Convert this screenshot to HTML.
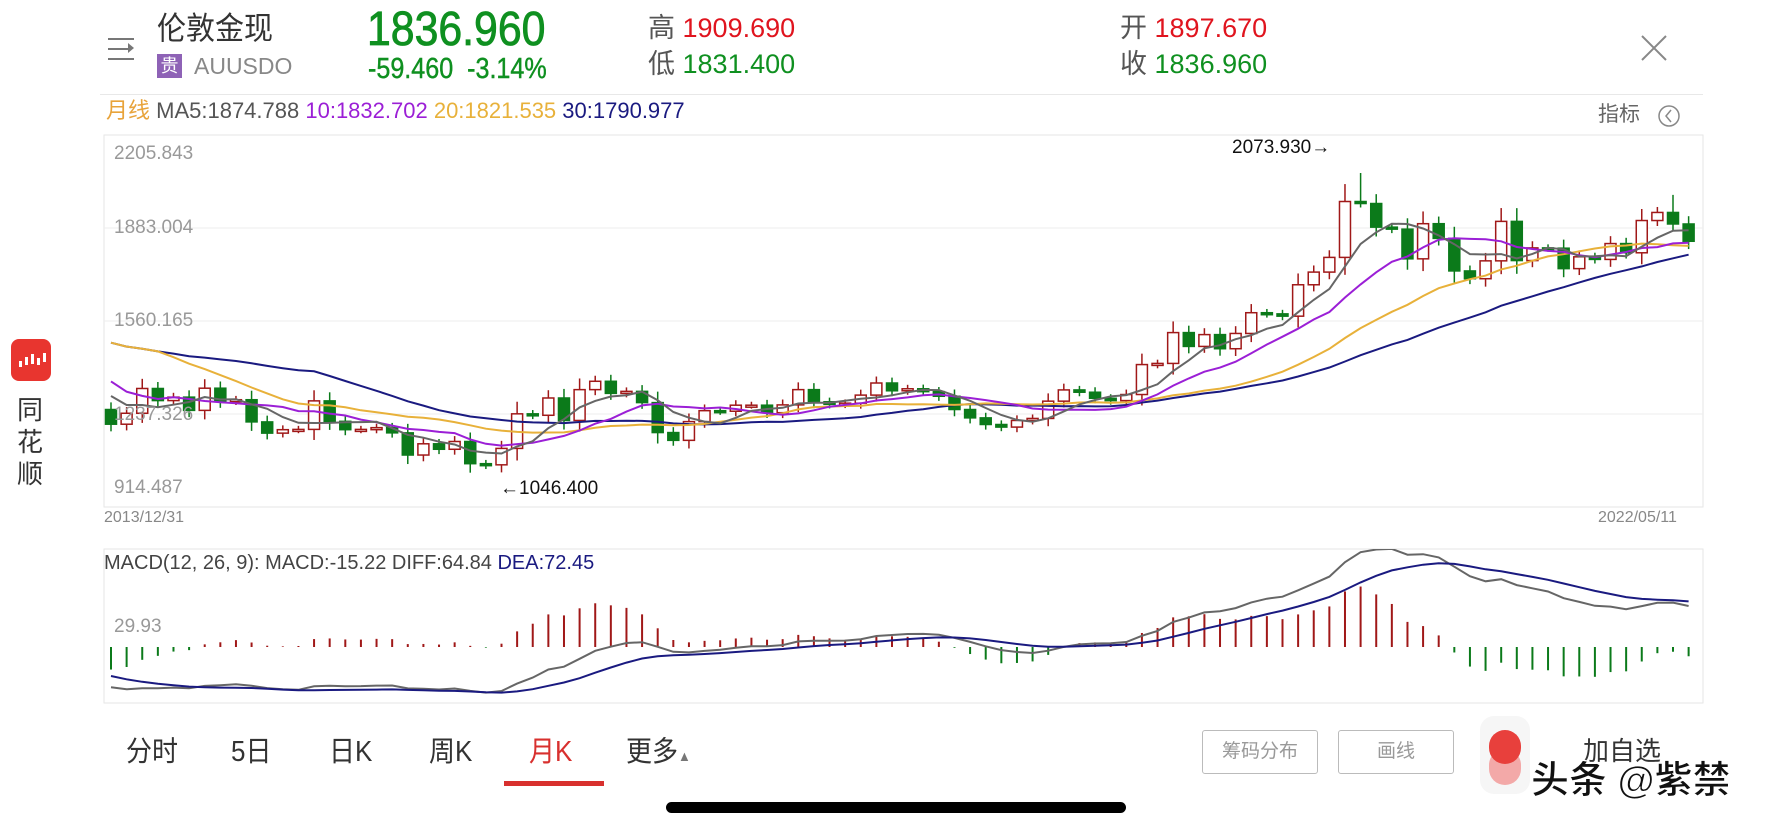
<!DOCTYPE html>
<html><head><meta charset="utf-8">
<style>
*{margin:0;padding:0;box-sizing:border-box}
body{width:1792px;height:828px;background:#fff;position:relative;overflow:hidden;font-family:"Liberation Sans","Noto Sans CJK SC",sans-serif;}
.a{position:absolute;white-space:nowrap;line-height:1}
.g{color:#0f9020}.r{color:#e0141e}.k{color:#333}
</style></head><body>
<div class="a" style="left:108px;top:38px;width:26px;height:2px;background:#777"></div>
<div class="a" style="left:108px;top:48px;width:20px;height:2px;background:#777"></div>
<div class="a" style="left:108px;top:58px;width:26px;height:2px;background:#777"></div>
<div class="a" style="left:128px;top:43px;width:0;height:0;border-left:6px solid #777;border-top:5px solid transparent;border-bottom:5px solid transparent"></div>
<div class="a k" style="left:157px;top:14px;font-size:29px;transform:scaleY(1.08);transform-origin:top">伦敦金现</div>
<div class="a" style="left:157px;top:54px;width:25px;height:24px;background:#8e62b6;color:#fff;font-size:18px;text-align:center;line-height:24px">贵</div>
<div class="a" style="left:194px;top:55px;font-size:23px;color:#888">AUUSDO</div>
<div class="a g" style="left:367px;top:4px;font-size:46px;transform:scale(0.93,1.05);transform-origin:left top;-webkit-text-stroke:0.8px #0f9020">1836.960</div>
<div class="a g" style="left:368px;top:55px;font-size:27px;transform:scale(0.93,1.05);transform-origin:left top;-webkit-text-stroke:0.4px #0f9020">-59.460&nbsp;&nbsp;-3.14%</div>
<div class="a" style="left:648px;top:15px;font-size:27px;color:#555">高 <span class="r">1909.690</span></div>
<div class="a" style="left:648px;top:51px;font-size:27px;color:#555">低 <span class="g">1831.400</span></div>
<div class="a" style="left:1120px;top:15px;font-size:27px;color:#555">开 <span class="r">1897.670</span></div>
<div class="a" style="left:1120px;top:51px;font-size:27px;color:#555">收 <span class="g">1836.960</span></div>
<svg class="a" style="left:1640px;top:34px" width="28" height="28"><path d="M2 2L26 26M26 2L2 26" stroke="#888" stroke-width="2"/></svg>
<div class="a" style="left:100px;top:94px;width:1603px;height:1px;background:#e8e8e8"></div>
<div class="a" style="left:106px;top:100px;font-size:22px;color:#e8a33a">月线 <span style="color:#555">MA5:1874.788</span> <span style="color:#9b1fd6">10:1832.702</span> <span style="color:#e8b13a">20:1821.535</span> <span style="color:#1a1a80">30:1790.977</span></div>
<div class="a" style="left:1598px;top:104px;font-size:21px;color:#666">指标</div>
<svg class="a" style="left:1657px;top:104px" width="24" height="24"><circle cx="12" cy="12" r="10" fill="none" stroke="#888" stroke-width="1.5"/><path d="M14 6L9 12L14 18" fill="none" stroke="#888" stroke-width="1.5"/></svg>
<div class="a" style="left:11px;top:339px;width:40px;height:42px;border-radius:8px;background:#e8352f"></div>
<svg class="a" style="left:11px;top:339px" width="40" height="42"><g fill="#fff"><rect x="8" y="22" width="3" height="6"/><rect x="14" y="18" width="3" height="8"/><rect x="20" y="15" width="3" height="10"/><rect x="26" y="19" width="3" height="7"/><rect x="32" y="14" width="3" height="9"/></g></svg>
<div class="a k" style="left:17px;top:394px;font-size:26px;line-height:32px;white-space:normal;width:28px">同花顺</div>
<svg id="c" class="a" style="left:0;top:0" width="1792" height="828"></svg>
<div class="a" style="left:114px;top:144px;font-size:19px;color:#999">2205.843</div>
<div class="a" style="left:114px;top:218px;font-size:19px;color:#999">1883.004</div>
<div class="a" style="left:114px;top:311px;font-size:19px;color:#999">1560.165</div>
<div class="a" style="left:114px;top:405px;font-size:19px;color:#999">1237.326</div>
<div class="a" style="left:114px;top:478px;font-size:19px;color:#999">914.487</div>
<div class="a" style="left:1232px;top:138px;font-size:19px;color:#111">2073.930→</div>
<div class="a" style="left:500px;top:479px;font-size:19px;color:#111">←1046.400</div>
<div class="a" style="left:104px;top:510px;font-size:16px;color:#888">2013/12/31</div>
<div class="a" style="left:1598px;top:510px;font-size:16px;color:#888">2022/05/11</div>
<div class="a" style="left:104px;top:553px;font-size:20px;color:#444">MACD(12, 26, 9): MACD:-15.22 DIFF:64.84 <span style="color:#1a1a80">DEA:72.45</span></div>
<div class="a" style="left:114px;top:617px;font-size:19px;color:#999">29.93</div>
<div class="a k" style="left:126px;top:738px;font-size:26px;transform:scaleY(1.1)">分时</div>
<div class="a k" style="left:231px;top:738px;font-size:26px;transform:scaleY(1.1)">5日</div>
<div class="a k" style="left:329px;top:738px;font-size:26px;transform:scaleY(1.1)">日K</div>
<div class="a k" style="left:429px;top:738px;font-size:26px;transform:scaleY(1.1)">周K</div>
<div class="a" style="left:529px;top:738px;font-size:26px;color:#d8302e;transform:scaleY(1.1)">月K</div>
<div class="a k" style="left:626px;top:738px;font-size:26px;transform:scaleY(1.1)">更多<span style="font-size:13px;color:#777">▲</span></div>
<div class="a" style="left:504px;top:781px;width:100px;height:5px;background:#d8302e"></div>
<div class="a" style="left:1202px;top:730px;width:116px;height:44px;border:1.5px solid #bbb;border-radius:3px;color:#999;font-size:19px;text-align:center;line-height:42px">筹码分布</div>
<div class="a" style="left:1338px;top:730px;width:116px;height:44px;border:1.5px solid #bbb;border-radius:3px;color:#999;font-size:19px;text-align:center;line-height:42px">画线</div>
<div class="a" style="left:1480px;top:716px;width:50px;height:78px;border-radius:14px;background:#f6f6f6"></div>
<div class="a" style="left:1489px;top:749px;width:32px;height:36px;border-radius:16px;background:#f3a9a8"></div>
<div class="a" style="left:1489px;top:730px;width:32px;height:34px;border-radius:16px;background:#e8403c"></div>
<div class="a k" style="left:1583px;top:738px;font-size:26px">加自选</div>
<div class="a" style="left:1531px;top:762px;font-size:38px;font-weight:bold;color:#111;-webkit-text-stroke:1px #fff;text-shadow:0 0 2px #fff,1px 1px 0 #fff,-1px -1px 0 #fff">头条 @紫禁</div>
<div class="a" style="left:666px;top:802px;width:460px;height:11px;border-radius:6px;background:#000"></div>
<script>
var pre=[1700,1700,1700,1700,1700,1660,1578,1595,1472,1393,1234,1312,1395,1326,1323,1253];
var c=[1202,1240,1326,1284,1296,1250,1327,1282,1287,1210,1171,1183,1184,
1283,1212,1183,1184,1190,1172,1095,1134,1115,1142,1065,1061,
1118,1238,1233,1293,1215,1322,1351,1309,1316,1277,1173,1146,
1211,1249,1247,1268,1268,1242,1269,1322,1280,1271,1275,1303,
1345,1318,1325,1315,1299,1253,1224,1201,1192,1215,1222,1282,
1321,1313,1292,1284,1305,1409,1413,1520,1472,1513,1464,1517,
1589,1585,1577,1686,1730,1781,1975,1968,1886,1879,1776,1898,
1847,1734,1707,1769,1906,1770,1814,1813,1742,1783,1774,1829,
1797,1909,1937,1897,1837];
var all=pre.concat(c),P=pre.length;
var MP=0;
var X=function(i){return 111+i*15.62};
var Y=function(p){return 135+(2205.843-p)*0.2881};
var s='<defs><clipPath id="m"><rect x="104" y="549" width="1599" height="154"/></clipPath></defs>';
s+='<rect x="104" y="135" width="1599" height="372" fill="none" stroke="#e6e6e6"/>';
[228,321,414].forEach(function(y){s+='<line x1="104" x2="1703" y1="'+y+'" y2="'+y+'" stroke="#eee"/>'});
s+='<rect x="104" y="549" width="1599" height="154" fill="none" stroke="#e6e6e6"/>';
function ma(n,col){var d='';for(var i=0;i<c.length;i++){var a=0,k=0;for(var j=P+i;j>P+i-n&&j>=MP;j--){a+=all[j];k++}d+=(i?'L':'M')+X(i).toFixed(1)+' '+Y(a/k).toFixed(1)}s+='<path d="'+d+'" fill="none" stroke="'+col+'" stroke-width="2"/>'}
for(var i=0;i<c.length;i++){var o=all[P+i-1],cl=c[i],up=cl>=o;var t=Math.max(o,cl),b=Math.min(o,cl);var h=t+Math.abs(cl-o)*0.25+12,l=b-Math.abs(cl-o)*0.25-12;
if(i==80)h=2073.93;if(i==24)l=1046.4;if(i==100)h=1998;
var col=up?'#a01818':'#0b7a1a',x=X(i);
s+='<line x1="'+x+'" x2="'+x+'" y1="'+Y(h)+'" y2="'+Y(l)+'" stroke="'+col+'" stroke-width="1.5"/>';
var yt=Y(t),hh=Math.max(2,Y(b)-yt);
s+='<rect x="'+(x-5.5)+'" y="'+yt+'" width="11" height="'+hh+'" fill="'+(up?'#fff':col)+'" stroke="'+col+'" stroke-width="1.5"/>';}
ma(30,'#1a1a80');ma(20,'#e8b13a');ma(10,'#9b1fd6');ma(5,'#666');
var e12=all[0],e26=all[0],dea=0,D=[],E=[];
for(var i=0;i<all.length;i++){e12=e12+(all[i]-e12)*2/13;e26=e26+(all[i]-e26)*2/27;var df=e12-e26;dea=dea+(df-dea)*0.2;if(i>=P){var w=Math.min(1,0.55+0.45*(i-P)/30);D.push(df*w);E.push(dea*w)}}
var sc=0.63,z=647,dd='',de='',bars='';
for(var i=0;i<c.length;i++){var x=X(i),m=2*(D[i]-E[i]);var y2=Math.max(551,Math.min(702,z-m*sc));
bars+='<line x1="'+x+'" x2="'+x+'" y1="'+z+'" y2="'+y2+'" stroke="'+(m>=0?'#a01818':'#0b7a1a')+'" stroke-width="2"/>';
dd+=(i?'L':'M')+x.toFixed(1)+' '+(z-D[i]*sc).toFixed(1);de+=(i?'L':'M')+x.toFixed(1)+' '+(z-E[i]*sc).toFixed(1);}
s+='<g clip-path="url(#m)">'+bars+'<path d="'+dd+'" fill="none" stroke="#666" stroke-width="2"/><path d="'+de+'" fill="none" stroke="#1a1a80" stroke-width="2"/></g>';
document.getElementById('c').innerHTML=s;
</script>
</box></body></html>
